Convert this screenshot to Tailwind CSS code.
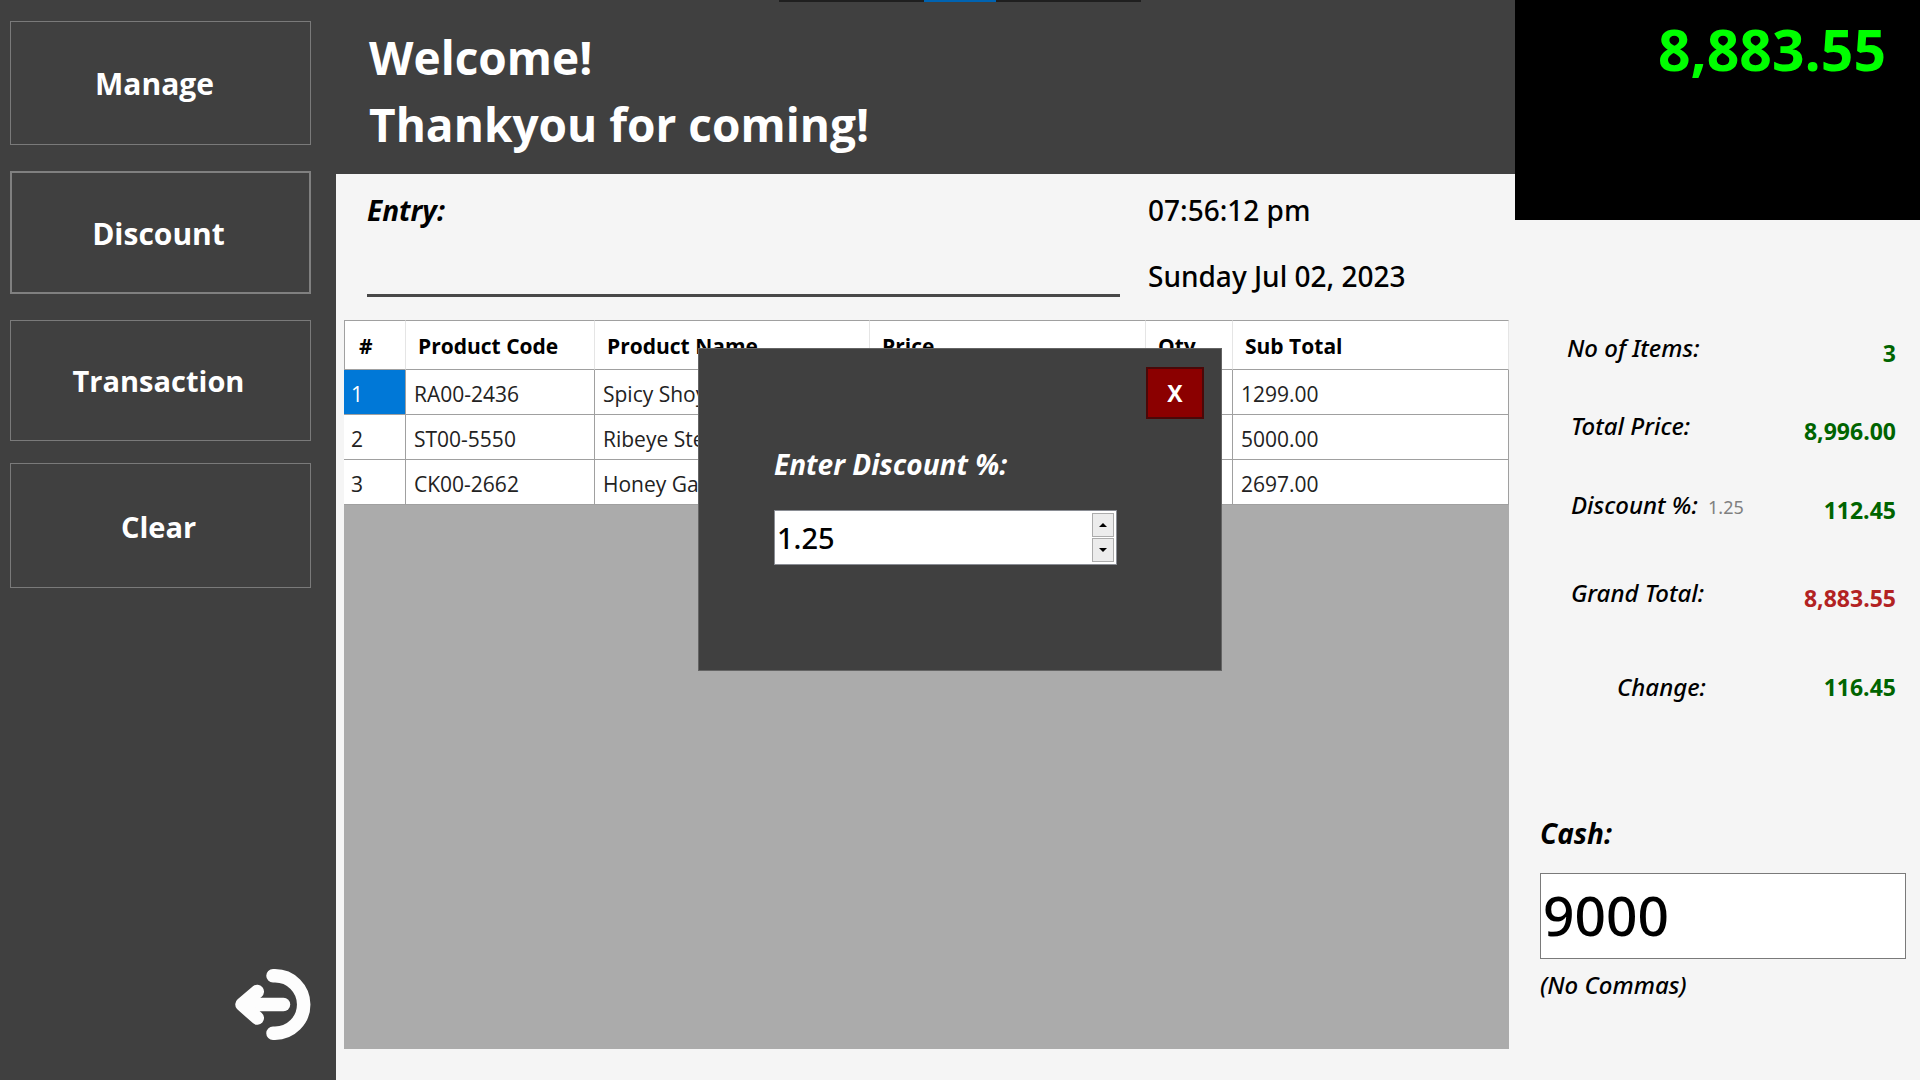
<!DOCTYPE html>
<html lang="en">
<head>
<meta charset="utf-8">
<meta name="viewport" content="width=device-width, initial-scale=1">
<title>Point of Sale</title>
<script src="https://cdn.jsdelivr.net/npm/@tailwindcss/browser@4"></script>
</head>
<body class="relative flex min-h-screen bg-[#f5f5f5] font-['Open_Sans','Noto_Sans',sans-serif] text-black">

  <!-- Window handle at the top edge -->
  <div class="absolute top-0 left-1/2 flex h-0.5 w-[362px] -translate-x-1/2 justify-center bg-[#1f1f1f]">
    <div class="w-[72px] bg-[#0063b1]"></div>
  </div>

  <!-- Sidebar -->
  <aside class="flex w-[336px] shrink-0 flex-col bg-[#404040] pt-[21px] pr-[25px] pb-10 pl-2.5 text-white">
    <nav class="flex flex-col gap-[26px]">
      <button type="button" class="h-[124px] border border-[#7a7a7a] pt-0.5 pr-3 text-3xl font-bold">Manage</button>
      <button type="button" class="h-[123px] border-2 border-[#808080] pt-0.5 pr-1 text-3xl font-bold">Discount</button>
      <button type="button" class="h-[121px] border border-[#7a7a7a] pr-1 text-[29px] font-bold">Transaction</button>
      <button type="button" class="-mt-1 h-[125px] border border-[#7a7a7a] pt-0.5 pr-1 text-[29px] font-bold">Clear</button>
    </nav>
    <button type="button" aria-label="Log out" class="mt-auto self-end">
      <svg class="block h-[71px] w-[76px]" viewBox="0 0 76 71" fill="none" stroke="#fdfdfd" stroke-width="13.5" stroke-linecap="round" stroke-linejoin="round">
        <path d="M38 6.8H40A28.7 28.7 0 0 1 40 64.2H38"/>
        <path d="M12 35.5H48.5"/>
        <path d="M22.3 22.5L7 35.5L22.3 49" fill="#fdfdfd"/>
      </svg>
    </button>
  </aside>

  <!-- Sale -->
  <main class="flex min-w-0 flex-1 flex-col">
    <header class="h-[174px] bg-[#404040] pt-6 pl-[33px]">
      <h1 class="text-[46px] leading-[67px] font-bold text-white">Welcome!<br>Thankyou for coming!</h1>
    </header>

    <section class="flex gap-7 pt-4 pl-[31px]">
      <div class="flex w-[753px] flex-col">
        <label for="entry" class="text-[28px] leading-10 font-bold italic">Entry:</label>
        <input id="entry" type="text" class="h-[67px] w-full border-b-3 border-[#484848] bg-transparent text-[28px] outline-none">
      </div>
      <div class="flex flex-col gap-[26px] font-['Noto_Sans',sans-serif] text-[28px] leading-10 font-medium whitespace-nowrap">
        <time>07:56:12 pm</time>
        <time datetime="2023-07-02">Sunday Jul 02, 2023</time>
      </div>
    </section>

    <section class="mt-[23px] mr-1.5 mb-[31px] ml-2 flex-1 bg-[#ababab]">
      <table class="w-full table-fixed border-separate border-spacing-0 bg-white text-left whitespace-nowrap">
        <colgroup>
          <col class="w-[62px]"><col class="w-[189px]"><col class="w-[275px]"><col class="w-[276px]"><col class="w-[87px]"><col>
        </colgroup>
        <thead class="text-[21px] leading-8 font-bold">
          <tr class="h-[50px]">
            <th class="border-y border-r border-l border-y-[#a0a0a0] border-r-[#e5e5e5] border-l-[#a0a0a0] pt-0.5 pl-3.5">#</th>
            <th class="border-y border-r border-y-[#a0a0a0] border-r-[#e5e5e5] pt-0.5 pl-3">Product Code</th>
            <th class="border-y border-r border-y-[#a0a0a0] border-r-[#e5e5e5] pt-0.5 pl-3">Product Name</th>
            <th class="border-y border-r border-y-[#a0a0a0] border-r-[#e5e5e5] pt-0.5 pl-3">Price</th>
            <th class="border-y border-r border-y-[#a0a0a0] border-r-[#e5e5e5] pt-0.5 pl-3">Qty</th>
            <th class="border-y border-r border-y-[#a0a0a0] border-r-[#e5e5e5] pt-0.5 pl-3">Sub Total</th>
          </tr>
        </thead>
        <tbody class="text-[21px] leading-8 text-[#222]">
          <tr class="h-[45px]">
            <td class="border-r border-b border-[#a0a0a0] bg-[#0078d7] pt-1 pl-[7px] text-white">1</td>
            <td class="border-r border-b border-[#a0a0a0] pt-1 pl-2">RA00-2436</td>
            <td class="border-r border-b border-[#a0a0a0] pt-1 pl-2">Spicy Shoyu</td>
            <td class="border-r border-b border-[#a0a0a0] pt-1 pl-2">1299.00</td>
            <td class="border-r border-b border-[#a0a0a0] pt-1 pl-2">1</td>
            <td class="border-r border-b border-[#a0a0a0] pt-1 pl-2">1299.00</td>
          </tr>
          <tr class="h-[45px]">
            <td class="border-r border-b border-[#a0a0a0] pt-1 pl-[7px]">2</td>
            <td class="border-r border-b border-[#a0a0a0] pt-1 pl-2">ST00-5550</td>
            <td class="border-r border-b border-[#a0a0a0] pt-1 pl-2">Ribeye Steak</td>
            <td class="border-r border-b border-[#a0a0a0] pt-1 pl-2">5000.00</td>
            <td class="border-r border-b border-[#a0a0a0] pt-1 pl-2">1</td>
            <td class="border-r border-b border-[#a0a0a0] pt-1 pl-2">5000.00</td>
          </tr>
          <tr class="h-[45px]">
            <td class="border-r border-b border-[#a0a0a0] pt-1 pl-[7px]">3</td>
            <td class="border-r border-b border-[#a0a0a0] pt-1 pl-2">CK00-2662</td>
            <td class="border-r border-b border-[#a0a0a0] pt-1 pl-2">Honey Garlic</td>
            <td class="border-r border-b border-[#a0a0a0] pt-1 pl-2">2697.00</td>
            <td class="border-r border-b border-[#a0a0a0] pt-1 pl-2">1</td>
            <td class="border-r border-b border-[#a0a0a0] pt-1 pl-2">2697.00</td>
          </tr>
        </tbody>
      </table>
    </section>
  </main>

  <!-- Totals and payment -->
  <aside class="flex w-[405px] shrink-0 flex-col">
    <div class="h-[220px] bg-black pt-px pr-[34px] text-right text-[57px] leading-24 font-bold text-[#00ff00]">8,883.55</div>

    <dl class="flex flex-col pt-[108px] pr-6 pl-[52px] text-2xl leading-10">
      <div class="flex h-[78px] justify-between">
        <dt class="font-['Noto_Sans',sans-serif] font-medium italic">No of Items:</dt>
        <dd class="text-[23px] leading-[50px] font-bold text-[#006400]">3</dd>
      </div>
      <div class="flex h-[79px] justify-between">
        <dt class="pl-1 font-['Noto_Sans',sans-serif] font-medium italic">Total Price:</dt>
        <dd class="text-[23px] leading-[50px] font-bold text-[#006400]">8,996.00</dd>
      </div>
      <div class="flex h-[88px] justify-between">
        <dt class="pl-1 font-['Noto_Sans',sans-serif] font-medium italic">Discount %: <span class="pl-1 text-lg font-normal text-[#808080] not-italic">1.25</span></dt>
        <dd class="text-[23px] leading-[50px] font-bold text-[#006400]">112.45</dd>
      </div>
      <div class="flex h-[94px] justify-between">
        <dt class="pl-1 font-['Noto_Sans',sans-serif] font-medium italic">Grand Total:</dt>
        <dd class="text-[23px] leading-[50px] font-bold text-[#b22222]">8,883.55</dd>
      </div>
      <div class="flex h-10 justify-between">
        <dt class="pl-[50px] font-['Noto_Sans',sans-serif] font-medium italic">Change:</dt>
        <dd class="text-[23px] font-bold text-[#006400]">116.45</dd>
      </div>
    </dl>

    <div class="flex flex-col pt-[106px] pr-3.5 pl-[25px]">
      <label for="cash" class="text-[28px] leading-10 font-bold italic">Cash:</label>
      <input id="cash" type="text" value="9000" class="mt-5 h-[86px] w-full border border-[#7a7a7a] bg-white pb-1 pl-0.5 font-['Noto_Sans',sans-serif] text-[55px] font-medium outline-none">
      <p class="mt-1.5 font-['Noto_Sans',sans-serif] text-2xl leading-10 font-medium italic">(No Commas)</p>
    </div>
  </aside>

  <!-- Discount dialog -->
  <div role="dialog" aria-label="Discount" class="absolute top-[348px] left-1/2 flex h-[323px] w-[524px] -translate-x-1/2 flex-col border border-[#646464] bg-[#404040] text-white">
    <button type="button" class="mt-[18px] mr-[17px] h-[52px] w-[58px] self-end border-2 border-[#4a0808] bg-[#8b0000] text-[23px] font-bold">X</button>
    <div class="flex flex-col px-[75px] pt-[25px]">
      <label for="discount" class="text-[28px] leading-10 font-bold italic">Enter Discount %:</label>
      <div class="mt-[26px] flex h-[55px] w-[343px] border border-[#8a8d94] bg-white p-0.5">
        <input id="discount" type="text" value="1.25" class="min-w-0 flex-1 bg-white font-['Noto_Sans',sans-serif] text-[29px] font-medium text-black outline-none">
        <div class="flex w-[22px] flex-col gap-px">
          <button type="button" aria-label="Increase" class="flex flex-1 items-center justify-center border border-[#acacac] bg-[#ececec]">
            <svg class="h-1.5 w-2" viewBox="0 0 8 6" fill="#000"><path d="M0 5H8L4 1Z"/></svg>
          </button>
          <button type="button" aria-label="Decrease" class="flex flex-1 items-center justify-center border border-[#acacac] bg-[#ececec]">
            <svg class="h-1.5 w-2" viewBox="0 0 8 6" fill="#000"><path d="M0 1H8L4 5Z"/></svg>
          </button>
        </div>
      </div>
    </div>
  </div>
</body>
</html>
